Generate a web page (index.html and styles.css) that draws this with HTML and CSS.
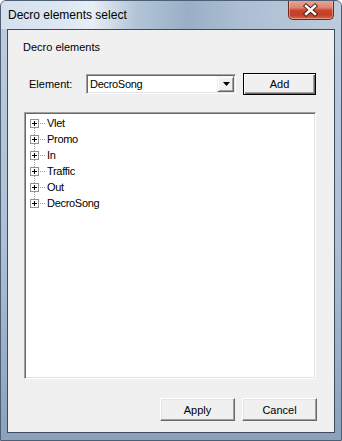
FILE: index.html
```html
<!DOCTYPE html>
<html>
<head>
<meta charset="utf-8">
<link rel="stylesheet" href="styles.css">
</head>
<body>
<div class="window">
  <div class="titlebar">
    <span class="title">Decro elements select</span>
    <div class="close">
      <svg width="46" height="19" viewBox="0 0 46 19">
        <path d="M18.5 6 L27.5 14 M27.5 6 L18.5 14" stroke="#4a1e16" stroke-width="4.6" stroke-linecap="square" fill="none"/>
        <path d="M18.5 6 L27.5 14 M27.5 6 L18.5 14" stroke="#ffffff" stroke-width="2.6" stroke-linecap="square" fill="none"/>
      </svg>
    </div>
  </div>
  <div class="client">
    <div class="group-label">Decro elements</div>
    <div class="element-row">
      <span class="lbl">Element:</span>
      <div class="combo">
        <span class="combo-text">DecroSong</span>
        <span class="combo-btn">
          <svg width="7" height="4" viewBox="0 0 7 4"><path d="M0 0 H7 L3.5 4 Z" fill="#000"/></svg>
        </span>
      </div>
      <button class="btn default add">Add</button>
    </div>
    <div class="tree">
      <div class="node"><span class="exp"></span><span class="dots"></span><span class="txt">Vlet</span></div>
      <div class="node"><span class="exp"></span><span class="dots"></span><span class="txt">Promo</span></div>
      <div class="node"><span class="exp"></span><span class="dots"></span><span class="txt">In</span></div>
      <div class="node"><span class="exp"></span><span class="dots"></span><span class="txt">Traffic</span></div>
      <div class="node"><span class="exp"></span><span class="dots"></span><span class="txt">Out</span></div>
      <div class="node last"><span class="exp"></span><span class="dots"></span><span class="txt">DecroSong</span></div>
    </div>
    <div class="footer">
      <button class="btn">Apply</button>
      <button class="btn">Cancel</button>
    </div>
  </div>
</div>
</body>
</html>
```

FILE: styles.css
```css
* { box-sizing: border-box; }
html, body { margin: 0; padding: 0; }
body {
  width: 342px;
  height: 441px;
  overflow: hidden;
  background: #ffffff;
  font-family: "Liberation Sans", Arial, sans-serif;
}
.window {
  width: 342px;
  height: 441px;
  border: 1px solid #4e5f75;
  border-radius: 6px 6px 0 0;
  background: linear-gradient(to bottom, #bccddf 0%, #adc0d5 55%, #8aa1bc 100%);
  display: flex;
  flex-direction: column;
  overflow: hidden;
}
.titlebar {
  height: 28px;
  flex: none;
  display: flex;
  justify-content: space-between;
  align-items: flex-start;
  background: linear-gradient(to right,
    rgba(214,226,238,0.95) 0%,
    rgba(222,232,242,0.95) 18%,
    rgba(236,242,248,0.9) 27%,
    rgba(170,190,210,0.6) 40%,
    rgba(140,163,188,0.7) 55%,
    rgba(160,180,202,0.6) 70%,
    rgba(190,205,220,0.6) 100%);
}
.title {
  margin: 7px 0 0 7px;
  font-size: 12px;
  line-height: 14px;
  color: #000;
}
.close {
  width: 46px;
  height: 20px;
  margin: -1px 7px 0 0;
  border: 1px solid #6b2a20;
  border-top: none;
  border-radius: 0 0 5px 5px;
  background: linear-gradient(to bottom, #e7ab9c 0%, #dc8670 40%, #c8452d 55%, #c2402a 80%, #d8694c 100%);
  box-shadow: inset 0 0 0 1px rgba(255,210,195,0.45);
  display: flex;
  align-items: flex-start;
  justify-content: center;
}
.close svg { display: block; margin-left: -1px; }
.client {
  height: 404px;
  margin: 0 6px 0 6px;
  border: 1px solid #3d4b5c;
  background: #f0f0f0;
  display: flex;
  flex-direction: column;
  font-size: 11px;
  color: #000;
}
.group-label {
  margin: 11px 0 0 15px;
  line-height: 13px;
}
.element-row {
  margin-top: 19px;
  height: 22px;
  display: flex;
  align-items: center;
}
.lbl {
  width: 78px;
  padding-left: 21px;
  line-height: 13px;
}
.combo {
  width: 150px;
  height: 20px;
  display: flex;
  align-items: center;
  background: #fff;
  border-top: 1px solid #a0a0a0;
  border-left: 1px solid #a0a0a0;
  border-right: 1px solid #ffffff;
  border-bottom: 1px solid #ffffff;
  box-shadow: inset 1px 1px 0 #696969, inset -1px -1px 0 #e3e3e3;
  padding: 1px 1px 2px 3px;
}
.combo-text {
  flex: 1;
  font-size: 11px;
  letter-spacing: -0.3px;
  line-height: 13px;
  padding-top: 1px;
}
.combo-btn {
  width: 17px;
  height: 16px;
  background: #f0f0f0;
  border-top: 1px solid #f0f0f0;
  border-left: 1px solid #f0f0f0;
  border-right: 1px solid #696969;
  border-bottom: 1px solid #696969;
  box-shadow: inset 1px 1px 0 #ffffff, inset -1px -1px 0 #a0a0a0;
  display: flex;
  align-items: center;
  justify-content: center;
}
.combo-btn svg { display: block; margin-left: 1px; }
.btn {
  width: 75px;
  height: 23px;
  padding: 0;
  font-family: "Liberation Sans", Arial, sans-serif;
  font-size: 11px;
  color: #000;
  background: #f0f0f0;
  border-top: 1px solid #ffffff;
  border-left: 1px solid #ffffff;
  border-right: 1px solid #696969;
  border-bottom: 1px solid #696969;
  box-shadow: inset -1px -1px 0 #a0a0a0, inset 1px 1px 0 #e3e3e3;
}
.btn.default {
  border: 1px solid #000;
  box-shadow: inset 1px 1px 0 #ffffff, inset -1px -1px 0 #696969, inset -2px -2px 0 #a0a0a0;
}
.add {
  width: 73px;
  height: 22px;
  margin-left: 7px;
}
.tree {
  margin: 17px 0 0 16px;
  width: 292px;
  height: 267px;
  background: #fff;
  border-top: 1px solid #a0a0a0;
  border-left: 1px solid #a0a0a0;
  border-right: 1px solid #ffffff;
  border-bottom: 1px solid #ffffff;
  box-shadow: inset 1px 1px 0 #696969, inset -1px -1px 0 #e3e3e3;
  padding: 2px 0 0 5px;
  display: flex;
  flex-direction: column;
}
.node {
  position: relative;
  height: 16px;
  display: flex;
  align-items: center;
}
.exp {
  position: relative;
  width: 9px;
  height: 9px;
  flex: none;
  border: 1px solid #919191;
  background: #fff;
}
.exp::before {
  content: "";
  position: absolute;
  left: 1px;
  top: 3px;
  width: 5px;
  height: 1px;
  background: #000;
}
.exp::after {
  content: "";
  position: absolute;
  left: 3px;
  top: 1px;
  width: 1px;
  height: 5px;
  background: #000;
}
.node:not(.last) .dots::before {
  content: "";
  position: absolute;
  left: 4px;
  top: 13px;
  height: 7px;
  border-left: 1px dotted #a0a0a0;
}
.dots {
  width: 5px;
  height: 1px;
  margin: 0 2px 0 1px;
  flex: none;
  border-top: 1px dotted #a0a0a0;
}
.txt {
  font-size: 11px;
  letter-spacing: -0.3px;
  line-height: 13px;
}
.footer {
  margin-top: 19px;
  display: flex;
  justify-content: flex-end;
  gap: 7px;
  padding-right: 17px;
}
```
